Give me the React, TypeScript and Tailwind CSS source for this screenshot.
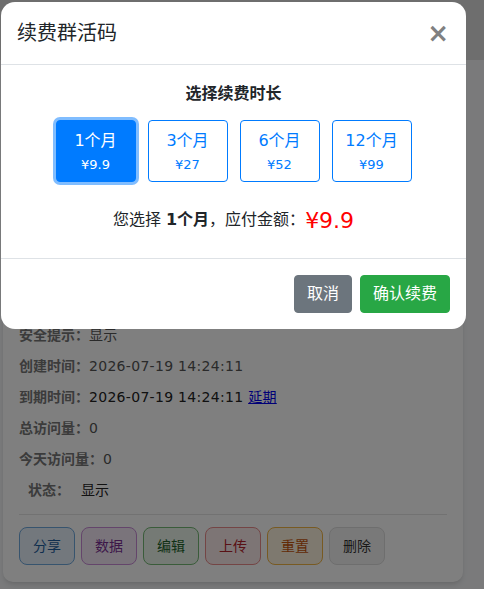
import React from "react";

const font = "font-['DejaVu_Sans','Noto_Sans_CJK_SC',sans-serif]";

function Row({ label, children, extra = "" }: { label: string; children: React.ReactNode; extra?: string }) {
  return (
    <div className={`h-[31px] flex items-center text-[14px] ${extra}`}>
      <span className="font-bold text-[#777]">{label}</span>
      <span className="text-[#555] tracking-[0.3px]">{children}</span>
    </div>
  );
}

export default function App() {
  const options = [
    { m: "1个月", p: "¥9.9" },
    { m: "3个月", p: "¥27" },
    { m: "6个月", p: "¥52" },
    { m: "12个月", p: "¥99" },
  ];
  const actions = [
    { t: "分享", c: "border-[#6fa8dc] bg-[#e7f1fb] text-[#1f5f9e]" },
    { t: "数据", c: "border-[#c88ad6] bg-[#f4e9f7] text-[#7b2f93]" },
    { t: "编辑", c: "border-[#74b874] bg-[#eaf5ea] text-[#23632a]" },
    { t: "上传", c: "border-[#e88a8a] bg-[#fbeaea] text-[#b3232a]" },
    { t: "重置", c: "border-[#f0b445] bg-[#fcf2df] text-[#c4540a]" },
    { t: "删除", c: "border-[#dcdcdc] bg-[#f3f3f3] text-[#333]" },
  ];
  return (
    <div className={`relative w-[484px] h-[589px] overflow-hidden bg-[#f4f5f7] ${font}`}>
      <div className="h-[60px] bg-[#dcdcdc]" />
      <div className="ml-[3px] mt-[4px] w-[460px] bg-white rounded-[10px] shadow-md px-[16px] pt-[8px] pb-[17px]">
        {["名称：", "标题：", "类型：", "二维码：", "群主：", "备注：", "密码：", "说明："].map((l) => (
          <Row key={l} label={l}>示例</Row>
        ))}
        <Row label="安全提示：">显示</Row>
        <Row label="创建时间：">2026-07-19 14:24:11</Row>
        <Row label="到期时间：">
          <span className="text-[#222]">2026-07-19 14:24:11 </span>
          <a className="text-[#0000ee] underline">延期</a>
        </Row>
        <Row label="总访问量：">0</Row>
        <Row label="今天访问量：">0</Row>
        <div className="h-[31px] flex items-center text-[14px] pl-[9px]">
          <span className="font-bold text-[#777] w-[53px]">状态：</span>
          <span className="text-[#222]">显示</span>
        </div>
        <div className="mt-[8px] border-t border-[#e5e5e5]" />
        <div className="mt-[12px] flex gap-[6px]">
          {actions.map((a) => (
            <div key={a.t} className={`w-[56px] h-[38px] rounded-[8px] border flex items-center justify-center text-[14px] ${a.c}`}>
              {a.t}
            </div>
          ))}
        </div>
      </div>

      <div className="absolute inset-0 bg-black/50" />

      <div className="absolute left-[1px] top-[2px] w-[465px] bg-white rounded-[14px] text-[#212529]">
        <div className="h-[63px] border-b border-[#dee2e6] flex items-center justify-between pl-[16px] pr-[17px]">
          <span className="text-[20px] leading-[30px]">续费群活码</span>
          <span className="text-[26px] font-bold text-[#808080] leading-none">×</span>
        </div>
        <div className="h-[193px] pt-[17px] flex flex-col items-center">
          <div className="text-[16px] font-bold leading-[24px]">选择续费时长</div>
          <div className="mt-[14px] flex gap-[12px]">
            {options.map((o, i) => (
              <div
                key={o.m}
                className={
                  i === 0
                    ? "w-[80px] h-[62px] rounded-[4px] border border-[#007bff] bg-[#007bff] text-white flex flex-col items-center justify-center ring-[3px] ring-[#80bdff]"
                    : "w-[80px] h-[62px] rounded-[4px] border border-[#007bff] bg-white text-[#007bff] flex flex-col items-center justify-center"
                }
              >
                <span className="text-[16px] leading-[20px] mt-[1px]">{o.m}</span>
                <span className="text-[13px] leading-[16px] mt-[6px]">{o.p}</span>
              </div>
            ))}
          </div>
          <div className="mt-[20px] flex items-center h-[36px] text-[16px]">
            <span>您选择&nbsp;</span>
            <span className="font-bold">1个月</span>
            <span>，应付金额：</span>
            <span className="text-[22px] text-[#ff0000]">¥9.9</span>
          </div>
        </div>
        <div className="border-t border-[#dee2e6] flex justify-end gap-[8px] pt-[16px] pb-[16px] pr-[16px]">
          <div className="h-[38px] px-[12px] rounded-[4px] border border-[#6c757d] bg-[#6c757d] text-white text-[16px] flex items-center">取消</div>
          <div className="h-[38px] px-[12px] rounded-[4px] border border-[#28a745] bg-[#28a745] text-white text-[16px] flex items-center">确认续费</div>
        </div>
      </div>
    </div>
  );
}
